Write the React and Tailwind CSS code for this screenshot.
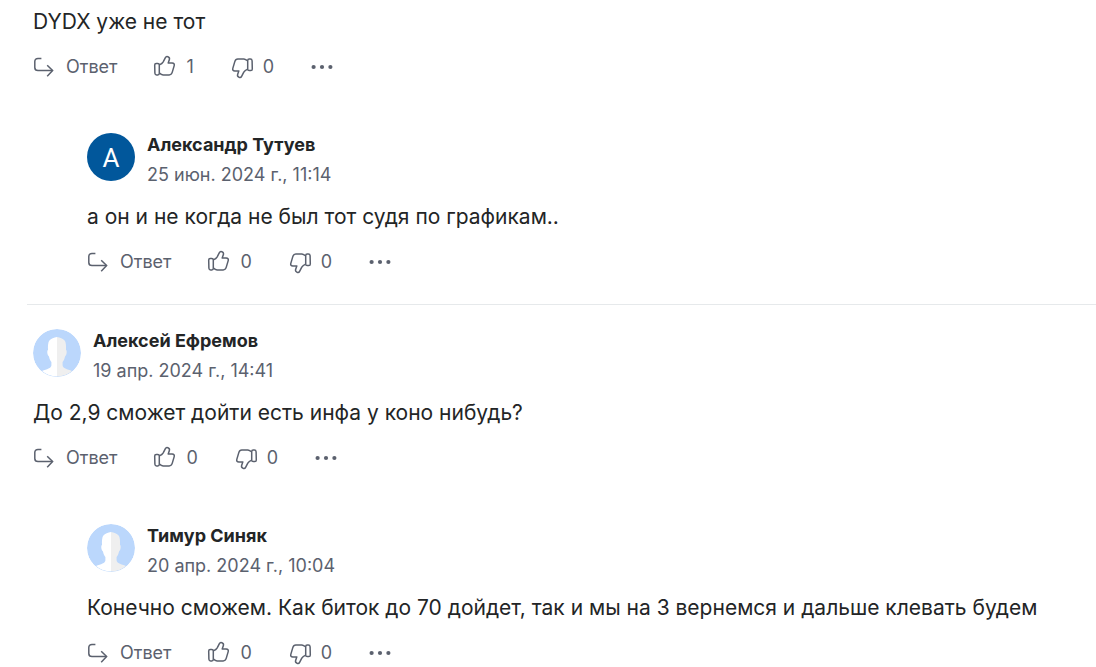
import React from 'react';

const ReplyIcon = () => (
  <svg width="24" height="24" viewBox="0 0 24 24" fill="none" stroke="currentColor" strokeWidth="1.5" aria-hidden="true">
    <path d="M8.4 3.5H5C3 3.5 1.8 4.7 1.8 6.6V12.4C1.8 14.3 3 15.5 5 15.5H19.4" />
    <path d="M14.2 10.2L19.6 15.5L14.2 21.2" />
  </svg>
);

const ThumbIcon = ({ down }) => (
  <svg
    width="24"
    height="24"
    viewBox="0 0 24 24"
    fill="none"
    stroke="currentColor"
    strokeWidth="1.5"
    strokeLinejoin="round"
    className={down ? 'rotate-180' : ''}
    aria-hidden="true"
  >
    <path d="M3.2 8.4H4.8C5.8 8.4 6.3 9 6.3 9.8V18.2C6.3 19.2 5.8 19.9 4.8 19.9H3.6C2.5 19.9 2 19.2 1.9 18.2L1.7 10C1.7 9 2.2 8.4 3.2 8.4Z" />
    <path d="M6.3 9.9C8.4 9 9.4 8.2 10.2 6.8L12.4 2.6C12.9 1.6 13.8 1.3 14.9 1.7C16.4 2.3 16.8 3.4 16.3 4.8L15.2 8H19.2C20.9 8 21.6 9.1 21.2 10.6L19.2 17.4C18.7 19 17.8 19.9 16.2 19.9H10.4C8.6 19.9 8 18.8 6.3 18.2" />
  </svg>
);

const DotsIcon = () => (
  <svg width="24" height="24" viewBox="0 0 24 24" fill="currentColor" aria-hidden="true">
    <circle cx="3.6" cy="12" r="2.1" />
    <circle cx="12" cy="12" r="2.1" />
    <circle cx="20.4" cy="12" r="2.1" />
  </svg>
);

const DefaultAvatar = () => (
  <svg width="48" height="48" viewBox="0 0 48 48" className="shrink-0 rounded-full" aria-hidden="true">
    <circle cx="24" cy="24" r="24" fill="#bbd7fc" />
    <path
      d="M24 8C21 8.6 18 9.8 16.4 11.4C15 13 14.8 17 15 21C13.8 21.4 14.2 26.4 16 27.4C16.4 30 17.4 31.6 18.4 33V36.6C18.2 39 14 40.6 9 42C13 45.6 18 47.4 24 47.4Z"
      fill="#fff"
    />
    <path
      d="M24 8C27 8.6 30 9.8 31.6 11.4C33 13 33.2 17 33 21C34.2 21.4 33.8 26.4 32 27.4C31.6 30 30.6 31.6 29.6 33V36.6C29.8 39 34 40.6 39 42C35 45.6 30 47.4 24 47.4Z"
      fill="#efefef"
    />
  </svg>
);

const LetterAvatar = ({ letter }) => (
  <div className="flex size-12 shrink-0 items-center justify-center rounded-full bg-[#01579b] pt-0.5 font-[Roboto,sans-serif] text-[26px] text-white">
    {letter}
  </div>
);

const Actions = ({ likes, dislikes }) => (
  <div className="mt-[18px] flex h-6 items-center gap-9 text-lg leading-6 text-[#5b616e]">
    <button type="button" className="flex items-center gap-[9px]">
      <ReplyIcon />
      Ответ
    </button>
    <button type="button" className="flex items-center gap-[9px]" aria-label="Нравится">
      <ThumbIcon />
      {likes}
    </button>
    <button type="button" className="flex items-center gap-[9px]" aria-label="Не нравится">
      <ThumbIcon down />
      {dislikes}
    </button>
    <button type="button" aria-label="Ещё">
      <DotsIcon />
    </button>
  </div>
);

const Comment = ({ author, letter, date, text, likes = 0, dislikes = 0 }) => (
  <article>
    {author && (
      <header className="mb-[15px] flex gap-3">
        {letter ? <LetterAvatar letter={letter} /> : <DefaultAvatar />}
        <div className="text-lg leading-6">
          <h3 className="font-bold">{author}</h3>
          <time className="mt-1.5 block text-[#5b616e]">{date}</time>
        </div>
      </header>
    )}
    <p className="text-[21px] leading-[30px]">{text}</p>
    <Actions likes={likes} dislikes={dislikes} />
  </article>
);

const Replies = ({ children }) => <div className="mt-[54px] ml-[54px]">{children}</div>;

const App = () => (
  <main className="bg-white pl-[27px] font-[Inter,sans-serif] text-[#232526]">
    {/* First thread */}
    <section className="border-b border-[#e6e9eb] pt-[7px] pb-[30px] pl-1.5">
      <Comment text="DYDX уже не тот" likes={1} />
      <Replies>
        <Comment
          author="Александр Тутуев"
          letter="A"
          date="25 июн. 2024 г., 11:14"
          text="а он и не когда не был тот судя по графикам.."
        />
      </Replies>
    </section>

    {/* Second thread */}
    <section className="pt-6 pl-1.5">
      <Comment
        author="Алексей Ефремов"
        date="19 апр. 2024 г., 14:41"
        text="До 2,9 сможет дойти есть инфа у коно нибудь?"
      />
      <Replies>
        <Comment
          author="Тимур Синяк"
          date="20 апр. 2024 г., 10:04"
          text="Конечно сможем. Как биток до 70 дойдет, так и мы на 3 вернемся и дальше клевать будем"
        />
      </Replies>
    </section>
  </main>
);

export default App;
